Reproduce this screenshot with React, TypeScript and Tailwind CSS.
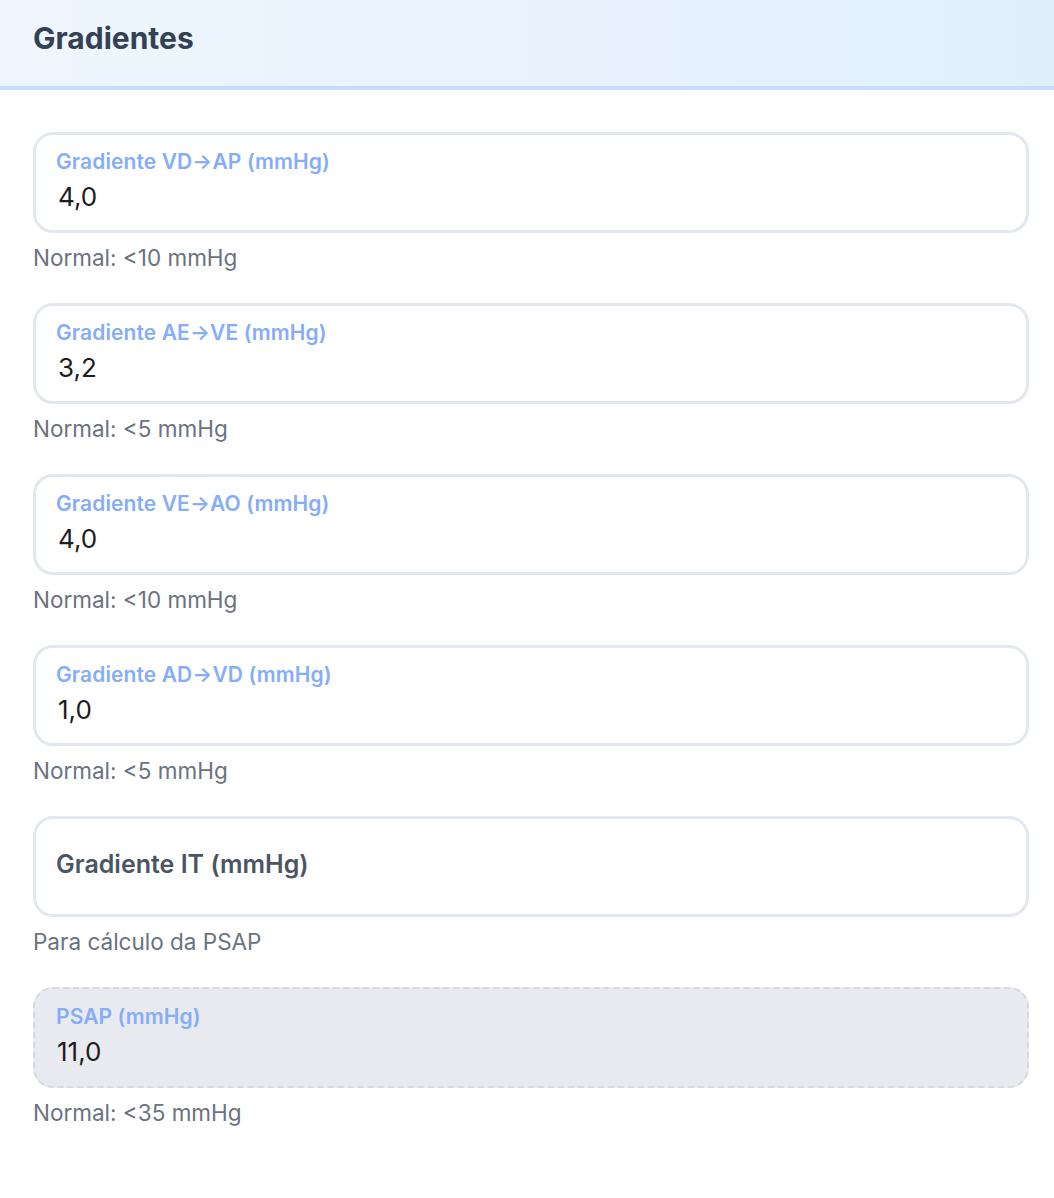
const fields = [
  { label: "Gradiente VD→AP (mmHg)", value: "4,0", hint: "Normal: <10 mmHg" },
  { label: "Gradiente AE→VE (mmHg)", value: "3,2", hint: "Normal: <5 mmHg" },
  { label: "Gradiente VE→AO (mmHg)", value: "4,0", hint: "Normal: <10 mmHg" },
  { label: "Gradiente AD→VD (mmHg)", value: "1,0", hint: "Normal: <5 mmHg" },
];

function Field({ label, value, hint }: { label: string; value: string; hint: string }) {
  return (
    <div className="flex flex-col">
      <div className="h-[101px] rounded-[20px] border-[3px] border-[#e3e8ef] bg-white px-[20px] pt-[14px]">
        <div className="text-[21px] font-semibold leading-[26px] tracking-[0.1px] text-[#86adf7]">{label}</div>
        <div className="mt-[7px] pl-[2px] text-[26px] leading-[30px] text-[#1b1d22]">{value}</div>
      </div>
      <p className="mt-[11px] text-[22.5px] leading-[28px] text-[#6b7280]">{hint}</p>
    </div>
  );
}

export default function App() {
  return (
    <div className="min-h-screen bg-white font-['Inter',sans-serif]">
      {/* Header */}
      <div className="h-[90px] border-b-[4px] border-[#c5dcfa] bg-gradient-to-r from-[#eff6fe] to-[#e1effd] px-[33px] pt-[19px]">
        <h2 className="text-[30px] font-bold leading-[38px] text-[#334155]">Gradientes</h2>
      </div>

      {/* Fields */}
      <div className="flex flex-col gap-[31px] pl-[33px] pr-[25px] pt-[42px]">
        {fields.map((f) => (
          <Field key={f.label} {...f} />
        ))}

        <div className="flex flex-col">
          <div className="flex h-[101px] items-center rounded-[20px] border-[3px] border-[#e3e8ef] bg-white px-[20px] pb-[6px]">
            <span className="text-[25px] font-semibold leading-[30px] text-[#4b5563]">Gradiente IT (mmHg)</span>
          </div>
          <p className="mt-[11px] text-[22.5px] leading-[28px] text-[#6b7280]">Para cálculo da PSAP</p>
        </div>

        <div className="flex flex-col">
          <div className="h-[101px] rounded-[20px] border-[2px] border-dashed border-[#d6d9e0] bg-[#e9eaef] px-[21px] pt-[15px]">
            <div className="text-[21px] font-semibold leading-[26px] tracking-[0.1px] text-[#86adf7]">PSAP (mmHg)</div>
            <div className="mt-[7px] pl-[1px] text-[26px] leading-[30px] text-[#1b1d22]">11,0</div>
          </div>
          <p className="mt-[11px] text-[22.5px] leading-[28px] text-[#6b7280]">Normal: &lt;35 mmHg</p>
        </div>
      </div>
    </div>
  );
}
